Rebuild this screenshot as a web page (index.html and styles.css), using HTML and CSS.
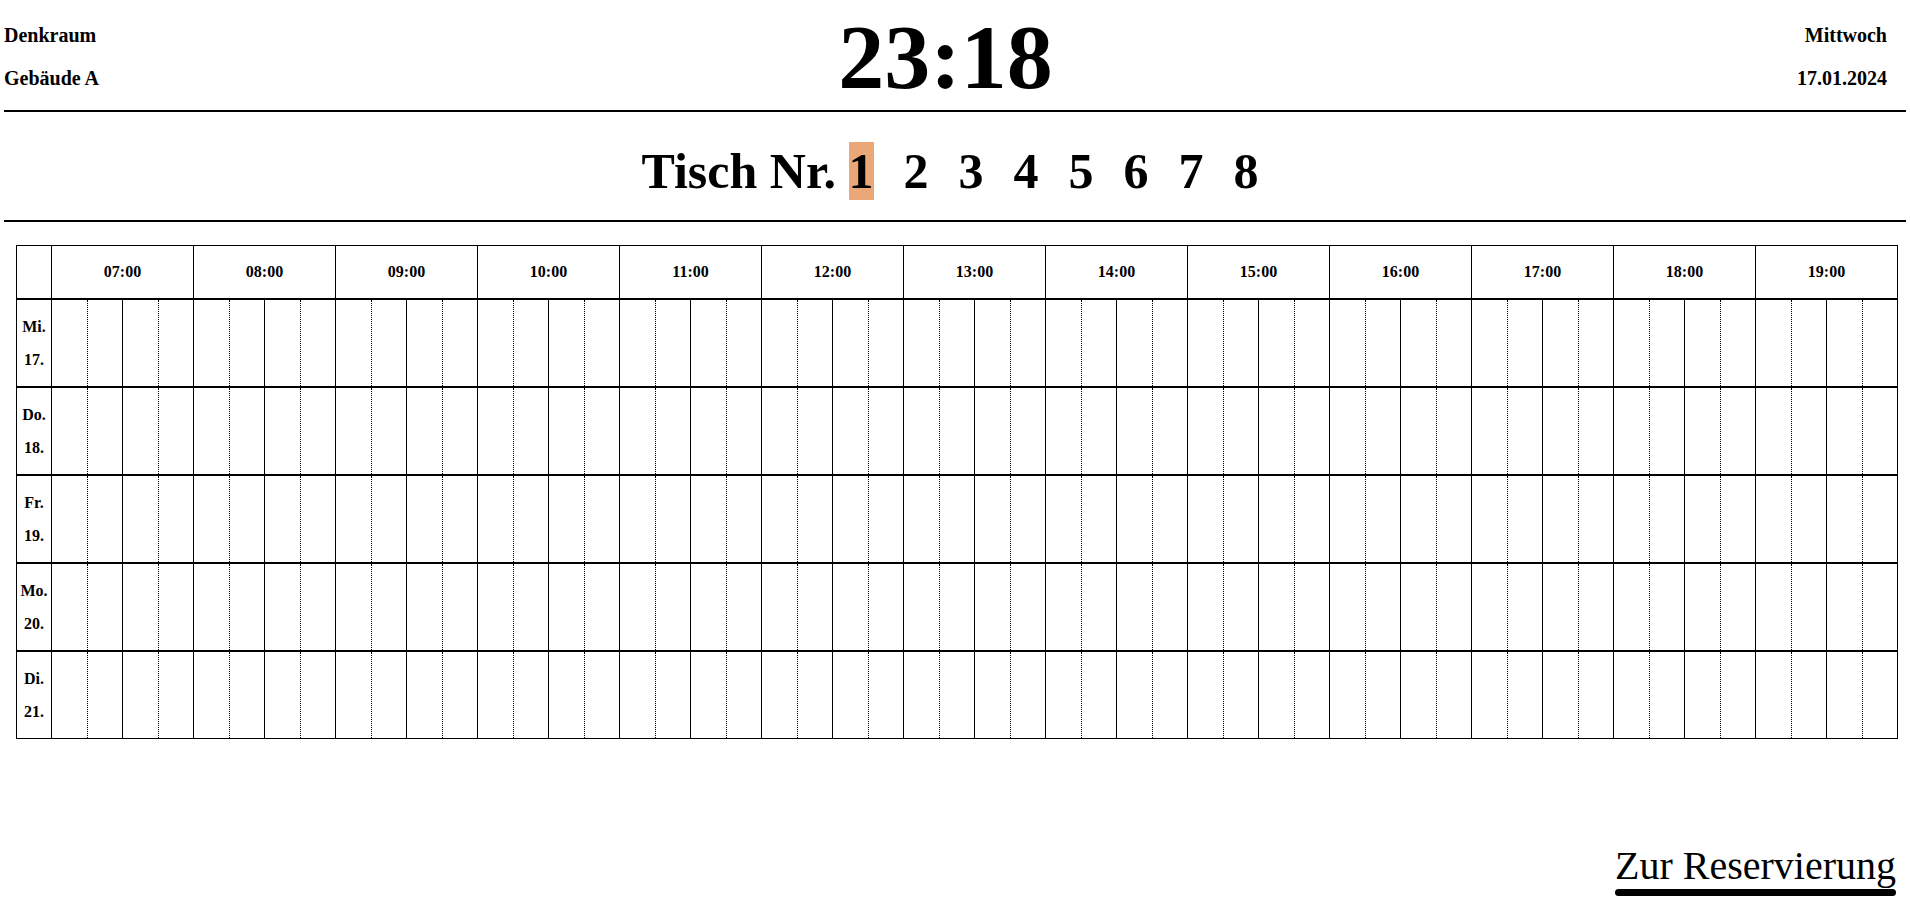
FILE: index.html
```html
<!DOCTYPE html>
<html lang="de">
<head>
    <meta charset="UTF-8">
    <meta name="viewport" content="width=device-width, initial-scale=1.0">
    <title>Denkraum - Tischplan</title>
    <link rel="stylesheet" href="styles.css">
</head>
<body>

    <header class="top">
        <div class="info">
            <p>Denkraum</p>
            <p>Gebäude A</p>
        </div>
        <h1 class="clock" id="clock">23:18</h1>
        <div class="info info-right">
            <p>Mittwoch</p>
            <p>17.01.2024</p>
        </div>
    </header>

    <div class="tables">
        Tisch Nr.
        <span class="table-no active">1</span>
        <span class="table-no">2</span>
        <span class="table-no">3</span>
        <span class="table-no">4</span>
        <span class="table-no">5</span>
        <span class="table-no">6</span>
        <span class="table-no">7</span>
        <span class="table-no">8</span>
    </div>

    <div class="plan" id="plan">
        <div class="row head">
            <div class="day"></div>
            <div class="hour">07:00</div>
            <div class="hour">08:00</div>
            <div class="hour">09:00</div>
            <div class="hour">10:00</div>
            <div class="hour">11:00</div>
            <div class="hour">12:00</div>
            <div class="hour">13:00</div>
            <div class="hour">14:00</div>
            <div class="hour">15:00</div>
            <div class="hour">16:00</div>
            <div class="hour">17:00</div>
            <div class="hour">18:00</div>
            <div class="hour">19:00</div>
        </div>
    </div>

    <div class="footer">
        <a href="#" class="reserve">Zur Reservierung</a>
    </div>

    <script>
        // build the day rows: 13 hours, 4 slots per hour
        const plan = document.getElementById('plan');
        const days = [['Mi.', '17.'], ['Do.', '18.'], ['Fr.', '19.'], ['Mo.', '20.'], ['Di.', '21.']];

        days.forEach(day => {
            const row = document.createElement('div');
            row.className = 'row';

            const label = document.createElement('div');
            label.className = 'day';
            label.innerHTML = '<span>' + day[0] + '</span><span>' + day[1] + '</span>';
            row.appendChild(label);

            for (let i = 0; i < 13 * 4; i++) {
                const slot = document.createElement('div');
                slot.className = 'slot';
                row.appendChild(slot);
            }

            plan.appendChild(row);
        });
    </script>
</body>
</html>
```

FILE: styles.css
```css
body {
    margin: 4px;
    font-family: "Liberation Serif", "Times New Roman", serif;
    color: #000;
    background-color: #fff;
}

/* header with place, clock and date */
.top {
    display: flex;
    justify-content: space-between;
    align-items: flex-start;
    border-bottom: 2px solid #000;
}

.info p {
    margin: 20px 0;
    font-size: 20px;
    font-weight: bold;
}

.info-right {
    text-align: right;
    padding-right: 19px;
}

.clock {
    margin: 0;
    padding-right: 5px;
    font-size: 92px;
    font-weight: bold;
}

/* table selection */
.tables {
    text-align: center;
    font-size: 50px;
    font-weight: bold;
    padding: 30px 0 20px;
    border-bottom: 2px solid #000;
}

.table-no {
    display: inline-block;
    margin-right: 17.5px;
    cursor: pointer;
}

.table-no:last-child {
    margin-right: 10px;
}

.table-no.active {
    background-color: #eaa878;
}

/* reservation plan */
.plan {
    width: fit-content;
    margin: 23px 0 0 12px;
    border: 1px solid #000;
}

.row {
    display: flex;
    height: 86px;
}

.row + .row {
    border-top: 2px solid #000;
}

.row.head {
    height: 52px;
}

.day {
    width: 34px;
    flex: none;
    display: flex;
    flex-direction: column;
    justify-content: center;
    align-items: center;
    font-size: 16px;
    font-weight: bold;
    line-height: 33px;
}

.hour {
    width: 142px;
    flex: none;
    box-sizing: border-box;
    border-left: 1px solid #000;
    display: flex;
    align-items: center;
    justify-content: center;
    font-size: 16px;
    font-weight: bold;
}

.slot {
    width: 35.5px;
    flex: none;
    box-sizing: border-box;
    border-left: 1px solid #000;
}

/* every second quarter gets a dotted line */
.slot:nth-child(odd) {
    border-left-style: dotted;
}

/* link to the booking page */
.footer {
    display: flex;
    justify-content: flex-end;
    margin-top: 103px;
    padding-right: 10px;
}

.reserve {
    display: inline-block;
    font-size: 40px;
    color: #000;
    text-decoration: none;
}

.reserve::after {
    content: "";
    display: block;
    height: 7px;
    border-radius: 4px;
    background-color: #000;
}
```
